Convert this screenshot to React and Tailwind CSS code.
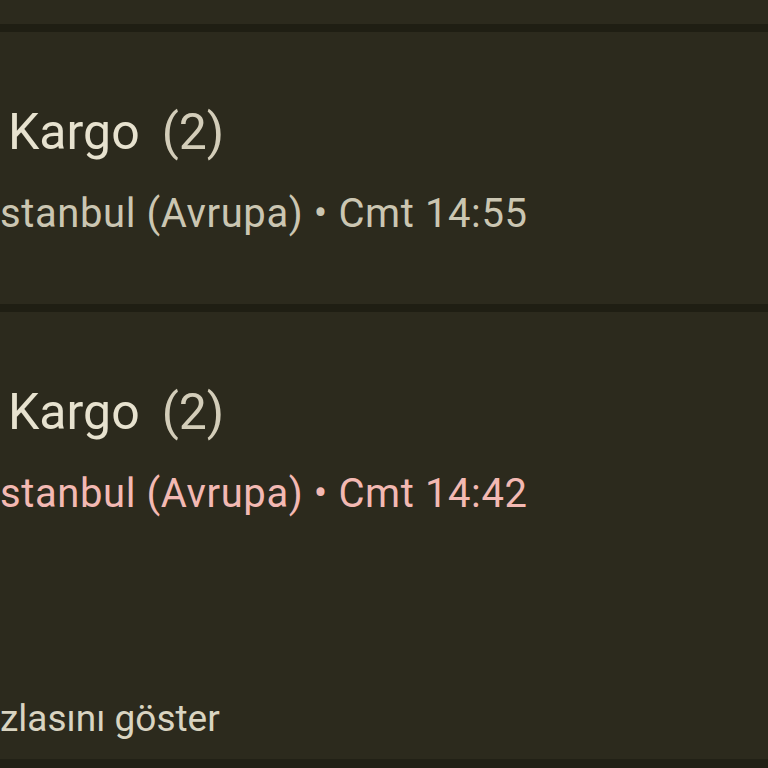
export default function App() {
  const font = { fontFamily: 'Roboto, "Noto Sans", sans-serif' };
  return (
    <div className="w-[768px] h-[768px] overflow-hidden bg-[#2c2a1d] flex flex-col" style={font}>
      <div className="h-[24px] shrink-0" />
      <div className="h-[8px] shrink-0 bg-[#1f1e13]" />
      <div className="h-[272px] shrink-0 flex flex-col pt-[70px] pl-[8px]">
        <div className="flex items-baseline whitespace-nowrap text-[50px] leading-[60px]">
          <span className="text-[#e7e2cf]">Kargo</span>
          <span className="ml-[22px] text-[#d3cdb9]">(2)</span>
        </div>
        <div className="mt-[30px] -ml-[8px] whitespace-nowrap text-[40px] leading-[44px] tracking-[0.6px] text-[#cbc6b2]">
          stanbul (Avrupa) • Cmt 14:55
        </div>
      </div>
      <div className="h-[8px] shrink-0 bg-[#1f1e13]" />
      <div className="flex-1 flex flex-col pt-[70px] pl-[8px]">
        <div className="flex items-baseline whitespace-nowrap text-[50px] leading-[60px]">
          <span className="text-[#e7e2cf]">Kargo</span>
          <span className="ml-[22px] text-[#d3cdb9]">(2)</span>
        </div>
        <div className="mt-[30px] -ml-[8px] whitespace-nowrap text-[40px] leading-[44px] tracking-[0.6px] text-[#f3b9b3]">
          stanbul (Avrupa) • Cmt 14:42
        </div>
        <div className="mt-[181px] -ml-[8px] whitespace-nowrap text-[37px] leading-[44px] text-[#d9d4c1]">
          zlasını göster
        </div>
      </div>
      <div className="h-[9px] shrink-0 bg-[#222116]" />
    </div>
  );
}
